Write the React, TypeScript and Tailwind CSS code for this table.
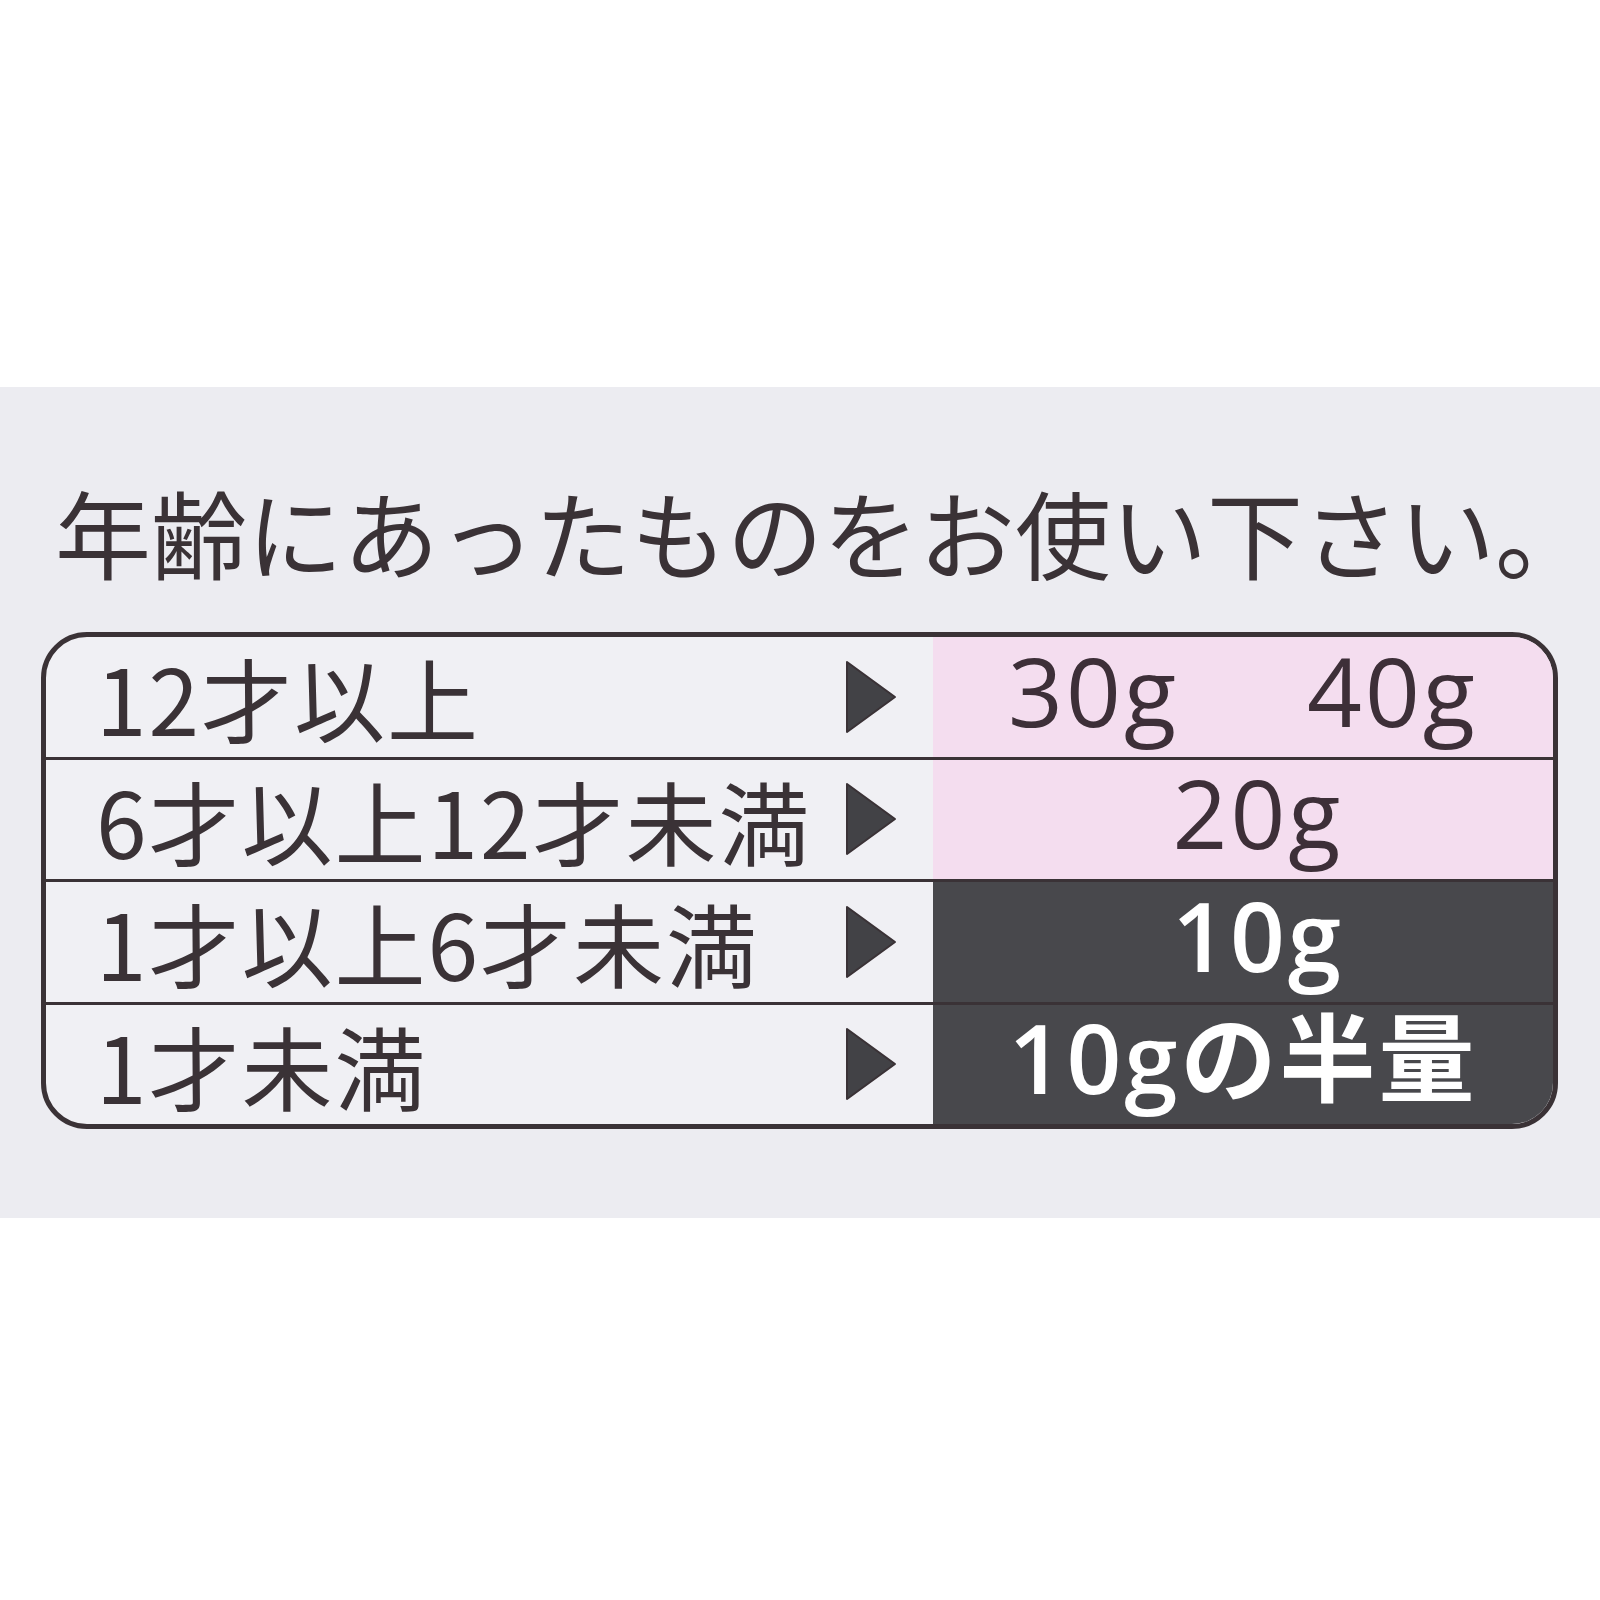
import React from "react"

const rows = [
  { label: "12才以上", values: ["30g", "40g"], tone: "pink", shift: "" },
  { label: "6才以上12才未満", values: ["20g"], tone: "pink", shift: "pl-[30px]" },
  { label: "1才以上6才未満", values: ["10g"], tone: "dark", shift: "pl-[30px]" },
  { label: "1才未満", values: ["10gの半量"], tone: "dark", shift: "" },
]

function Arrow() {
  return (
    <svg width="52" height="74" viewBox="0 0 52 74" className="shrink-0">
      <polygon points="2,2 50,37 2,72" fill="#424246" stroke="#3a3236" strokeWidth="2" strokeLinejoin="round" />
    </svg>
  )
}

export default function App() {
  return (
    <div className="w-[1600px] h-[1600px] bg-white flex flex-col font-[family-name:'Noto_Sans_CJK_JP','Noto_Sans',sans-serif]">
      <div className="h-[387px] shrink-0" />

      {/* パネル */}
      <div className="h-[831px] shrink-0 bg-[#ececf1] pt-[96px] pl-[41px] pr-[42px]">
        <h1 className="pl-[14px] text-[96px] leading-none font-normal text-[#3a3236] whitespace-nowrap">
          年齢にあったものをお使い下さい。
        </h1>

        <div className="mt-[53px] border-[5px] border-[#3a3236] rounded-[46px] overflow-hidden bg-[#f0f0f4] flex flex-col h-[497px]">
          {rows.map((row, i) => (
            <div
              key={row.label}
              className={"flex flex-1 " + (i > 0 ? "border-t-[3px] border-[#3a3236]" : "")}
            >
              <div className="w-[887px] shrink-0 flex items-center justify-between pl-[50px] pr-[36px]">
                <span className="text-[91px] leading-none tracking-[2px] text-[#3a3236] whitespace-nowrap">
                  {row.label}
                </span>
                <Arrow />
              </div>
              <div
                className={
                  (row.tone === "pink"
                    ? "flex-1 flex items-center justify-center gap-[128px] bg-[#f4ddef] text-[#3d2f38] pb-[14px] "
                    : "flex-1 flex items-center justify-center bg-[#48484c] text-white pb-[14px] ") + row.shift
                }
              >
                {row.values.map((v) => (
                  <span
                    key={v}
                    className={
                      "relative z-10 text-[96px] leading-none tracking-[3px] whitespace-nowrap font-[family-name:'Open_Sans','Noto_Sans_CJK_JP',sans-serif] " +
                      (row.tone === "dark" ? "font-semibold" : "font-normal")
                    }
                  >
                    {v}
                  </span>
                ))}
              </div>
            </div>
          ))}
        </div>
      </div>

      <div className="flex-1 bg-white" />
    </div>
  )
}
